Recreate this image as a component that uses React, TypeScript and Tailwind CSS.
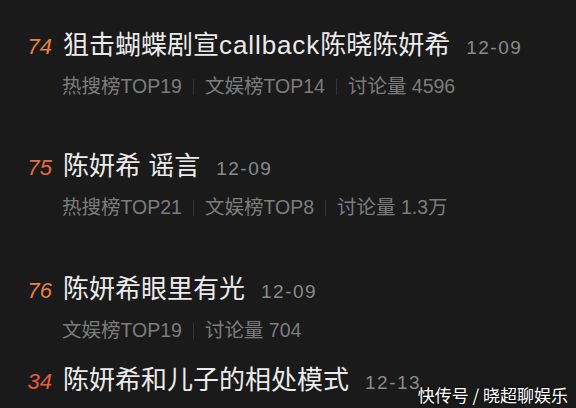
import React from 'react';

type Item = {
  rank: string;
  rankColor: string;
  title: string;
  date: string;
  tags: string[];
  gap: string;
};

const items: Item[] = [
  {
    rank: '74',
    rankColor: 'text-[#e9803e]',
    title: '狙击蝴蝶剧宣callback陈晓陈妍希',
    date: '12-09',
    tags: ['热搜榜TOP19', '文娱榜TOP14', '讨论量 4596'],
    gap: 'mt-0',
  },
  {
    rank: '75',
    rankColor: 'text-[#e46c46]',
    title: '陈妍希 谣言',
    date: '12-09',
    tags: ['热搜榜TOP21', '文娱榜TOP8', '讨论量 1.3万'],
    gap: 'mt-[52px]',
  },
  {
    rank: '76',
    rankColor: 'text-[#e9803e]',
    title: '陈妍希眼里有光',
    date: '12-09',
    tags: ['文娱榜TOP19', '讨论量 704'],
    gap: 'mt-[54px]',
  },
  {
    rank: '34',
    rankColor: 'text-[#e25c3e]',
    title: '陈妍希和儿子的相处模式',
    date: '12-13',
    tags: [],
    gap: 'mt-[22px]',
  },
];

const font = "font-['Liberation_Sans','Noto_Sans_CJK_SC',sans-serif]";

// latin words in titles run a bit wider in the original font
function Title({ text }: { text: string }) {
  const parts = text.split(/([A-Za-z]+)/);
  return (
    <span className="text-[26px] text-[#ebebeb]">
      {parts.map((p, i) =>
        /^[A-Za-z]+$/.test(p) ? (
          <span key={i} className="tracking-[0.9px]">
            {p}
          </span>
        ) : (
          <React.Fragment key={i}>{p}</React.Fragment>
        )
      )}
    </span>
  );
}

export default function App() {
  return (
    <div className={`relative w-[576px] h-[408px] overflow-hidden bg-[#1a1a1a] pt-[30px] ${font}`}>
      {items.map((item) => (
        <div key={item.rank} className={item.gap}>
          {/* Title line */}
          <div className="flex items-baseline h-[30px] leading-[30px] whitespace-nowrap">
            <span className={`w-[63px] pr-[11px] text-right italic text-[22px] ${item.rankColor}`}>
              {item.rank}
            </span>
            <Title text={item.title} />
            <span className="ml-[16px] text-[19px] tracking-[1.5px] text-[#8a8a8a]">{item.date}</span>
          </div>

          {/* Stats line */}
          {item.tags.length > 0 && (
            <div className="mt-[15px] pl-[62px] flex items-center h-[24px] text-[19.5px] text-[#7c7c7c] whitespace-nowrap">
              {item.tags.map((tag, i) => (
                <React.Fragment key={tag}>
                  {i > 0 && <span className="mx-[11px] w-px h-[16px] bg-[#333333]" />}
                  <span>{tag}</span>
                </React.Fragment>
              ))}
            </div>
          )}
        </div>
      ))}

      {/* Watermark */}
      <div className="absolute right-[8px] bottom-[1px] text-[17px] text-white [text-shadow:0_0_3px_rgba(0,0,0,0.9)] font-['Noto_Sans_CJK_SC',sans-serif]">
        快传号 / 晓超聊娱乐
      </div>
    </div>
  );
}
